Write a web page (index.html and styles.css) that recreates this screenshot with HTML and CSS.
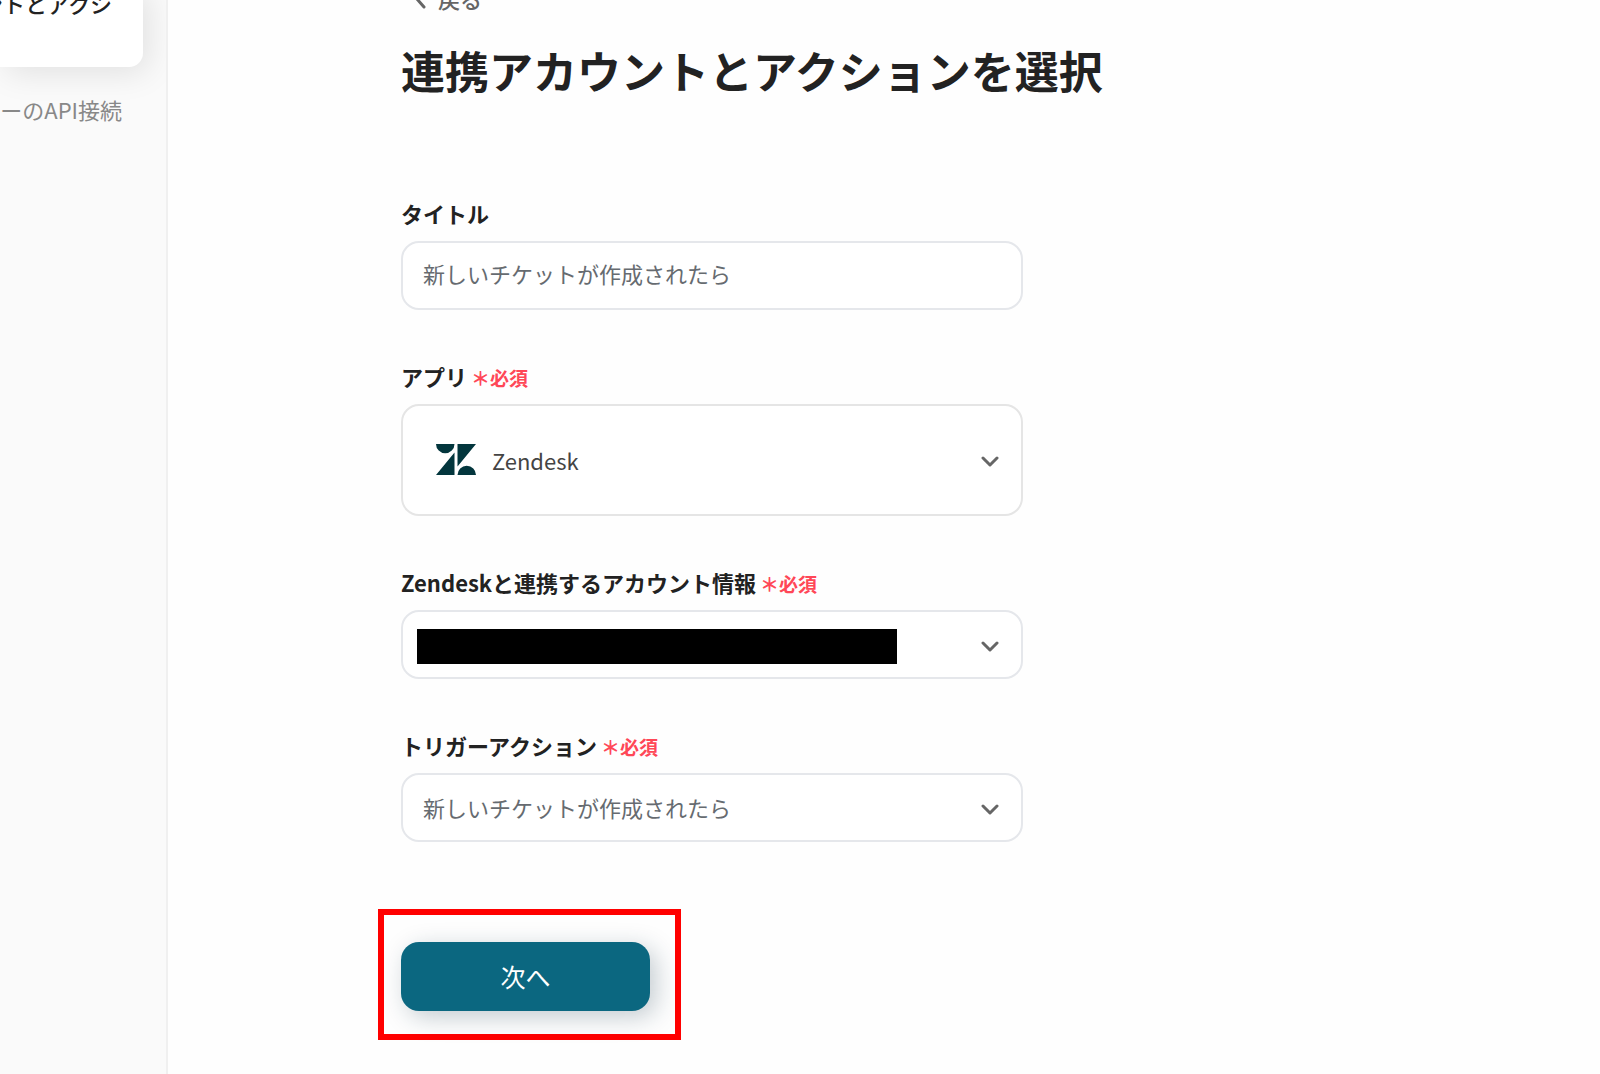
FILE: index.html
```html
<!DOCTYPE html>
<html lang="ja">
<head>
  <meta charset="UTF-8">
  <meta name="viewport" content="width=device-width, initial-scale=1.0">
  <title>連携アカウントとアクションを選択</title>
  <link rel="stylesheet" href="styles.css">
</head>
<body>
  <aside class="sidebar">
    <div class="step active"><span>ントとアクシ</span></div>
    <div class="step"><span>ガーのAPI接続</span></div>
  </aside>

  <main class="content">
    <a href="#" class="back">
      <svg width="12" height="20" viewBox="0 0 12 20"><path d="M10 2L3 10l7 8"/></svg>
      戻る
    </a>
    <h1>連携アカウントとアクションを選択</h1>

    <form>
      <div class="field">
        <label for="title">タイトル</label>
        <input type="text" id="title" value="新しいチケットが作成されたら">
      </div>

      <div class="field">
        <label for="app">アプリ<span class="required">＊必須</span></label>
        <div class="select-box">
          <select id="app" class="app-select">
            <option>Zendesk</option>
          </select>
          <svg class="app-logo" width="40" height="31" viewBox="0 0 40 31">
            <path d="M0 0h18.500a9.250 9.250 0 0 1-18.500 0zM18.500 8.500V31H0zM21.500 0H40L21.500 22.500zM21.500 31a9.250 9.250 0 0 1 18.500 0z"/>
          </svg>
          <svg class="chevron" width="18" height="12" viewBox="0 0 18 12"><path d="M2 2l7 7 7-7"/></svg>
        </div>
      </div>

      <div class="field">
        <label for="account">Zendeskと連携するアカウント情報<span class="required">＊必須</span></label>
        <div class="select-box">
          <select id="account">
            <option></option>
          </select>
          <span class="mask"></span>
          <svg class="chevron" width="18" height="12" viewBox="0 0 18 12"><path d="M2 2l7 7 7-7"/></svg>
        </div>
      </div>

      <div class="field">
        <label for="trigger">トリガーアクション<span class="required">＊必須</span></label>
        <div class="select-box">
          <select id="trigger">
            <option>新しいチケットが作成されたら</option>
          </select>
          <svg class="chevron" width="18" height="12" viewBox="0 0 18 12"><path d="M2 2l7 7 7-7"/></svg>
        </div>
      </div>

      <div class="highlight">
        <button type="submit">次へ</button>
      </div>
    </form>
  </main>
</body>
</html>
```
FILE: styles.css
```css
* {
  box-sizing: border-box;
}

body {
  font-family: "Noto Sans CJK JP", sans-serif;
  font-size: 22px;
  line-height: 33px;
  color: #222;
  background: #fefefe;
  margin: 0;
  display: flex;
  min-height: 100vh;
  overflow: hidden;
}

/* Sidebar, scrolled partly out of view */
.sidebar {
  flex: 0 0 168px;
  background: #fafafa;
  border-right: 2px solid #f0f0f0;
  overflow: hidden;
}

.step {
  display: flex;
  justify-content: flex-end;
  margin-right: 44px;
  margin-top: 26px;
  color: #888;
  white-space: nowrap;
}

.step.active {
  height: 80px;
  margin: -13px 23px 0 0;
  padding-right: 31px;
  background: #fff;
  border-radius: 0 0 14px 0;
  box-shadow: 6px 6px 32px rgba(0, 0, 0, 0.1);
  color: #222;
  font-weight: 500;
}

.content {
  flex: 1;
  padding: 0 40px 34px 233px;
}

.back {
  display: flex;
  align-items: center;
  gap: 12px;
  margin: -18px 0 0 13px;
  color: #666;
  font-weight: 500;
  text-decoration: none;
}

.back svg,
.chevron {
  fill: none;
  stroke: #666;
  stroke-width: 3;
  stroke-linecap: round;
  stroke-linejoin: round;
}

h1 {
  margin: 23px 0 93px;
  font-size: 44px;
  line-height: 64px;
  white-space: nowrap;
}

form {
  max-width: 622px;
}

.field {
  margin-bottom: 50px;
}

label {
  display: block;
  margin-bottom: 12px;
  line-height: 32px;
  font-weight: bold;
}

.field:first-child {
  padding-top: 2px;
}

.required {
  margin-left: 4px;
  font-size: 19px;
  line-height: 1;
  color: #ff4757;
}

input,
select {
  display: block;
  width: 100%;
  height: 69px;
  padding: 0 20px;
  border: 2px solid #e5e7eb;
  border-radius: 18px;
  background: #fff;
  color: #666b70;
  font: inherit;
  appearance: none;
}

input {
  padding-bottom: 6px;
}

.select-box {
  position: relative;
}

.app-select {
  height: 112px;
  padding-left: 89px;
  border-color: #e5e5e5;
  color: #444;
}

.app-logo {
  position: absolute;
  top: 40px;
  left: 35px;
  fill: #03363d;
}

.chevron {
  position: absolute;
  top: calc(50% - 4px);
  right: 24px;
  pointer-events: none;
}

.mask {
  position: absolute;
  top: 19px;
  left: 16px;
  width: 480px;
  height: 35px;
  background: #000;
}

.highlight {
  width: 303px;
  margin: 67px 0 0 -23px;
  padding: 27px 25px 23px 17px;
  border: 6px solid #f00;
}

button {
  display: block;
  width: 249px;
  height: 69px;
  border: none;
  border-radius: 18px;
  background: #0b6780;
  color: #fff;
  font: inherit;
  font-size: 25px;
  box-shadow: 6px 6px 24px rgba(20, 50, 70, 0.25);
  cursor: pointer;
}
```
